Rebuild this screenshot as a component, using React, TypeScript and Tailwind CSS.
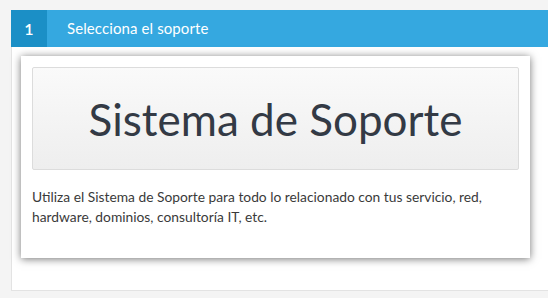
const App = () => {
  return (
    <div className="min-h-screen bg-[#f4f4f4] pt-[10px] pl-[11px] font-['Lato','Liberation_Sans',sans-serif]">
      <div className="flex h-[37px] bg-[#35a8e0] text-white">
        <div className="w-[36px] flex items-center justify-center bg-[#1b8fc6] text-[16px] font-semibold">1</div>
        <div className="pl-[20px] flex items-center text-[15px] tracking-[0.1px]">Selecciona el soporte</div>
      </div>
      <div className="bg-white border-l border-b border-[#e3e3e3] pt-[9px] pl-[9px] pr-[18px] pb-[32px]">
        <div className="bg-white shadow-[0_1px_8px_rgba(0,0,0,0.55)] pt-[11px] px-[11px] pb-[31px]">
          <div className="h-[103px] flex items-center justify-center rounded-[2px] border border-[#dcdcdc] bg-gradient-to-b from-[#fafafa] to-[#eeeeee] text-[44px] text-[#333a45]">
            Sistema de Soporte
          </div>
          <p className="mt-[17px] text-[13.8px] leading-[20px] text-[#3a3a3a]">
            Utiliza el Sistema de Soporte para todo lo relacionado con tus servicio, red, hardware, dominios, consultoría IT, etc.
          </p>
        </div>
      </div>
    </div>
  );
};

export default App;
